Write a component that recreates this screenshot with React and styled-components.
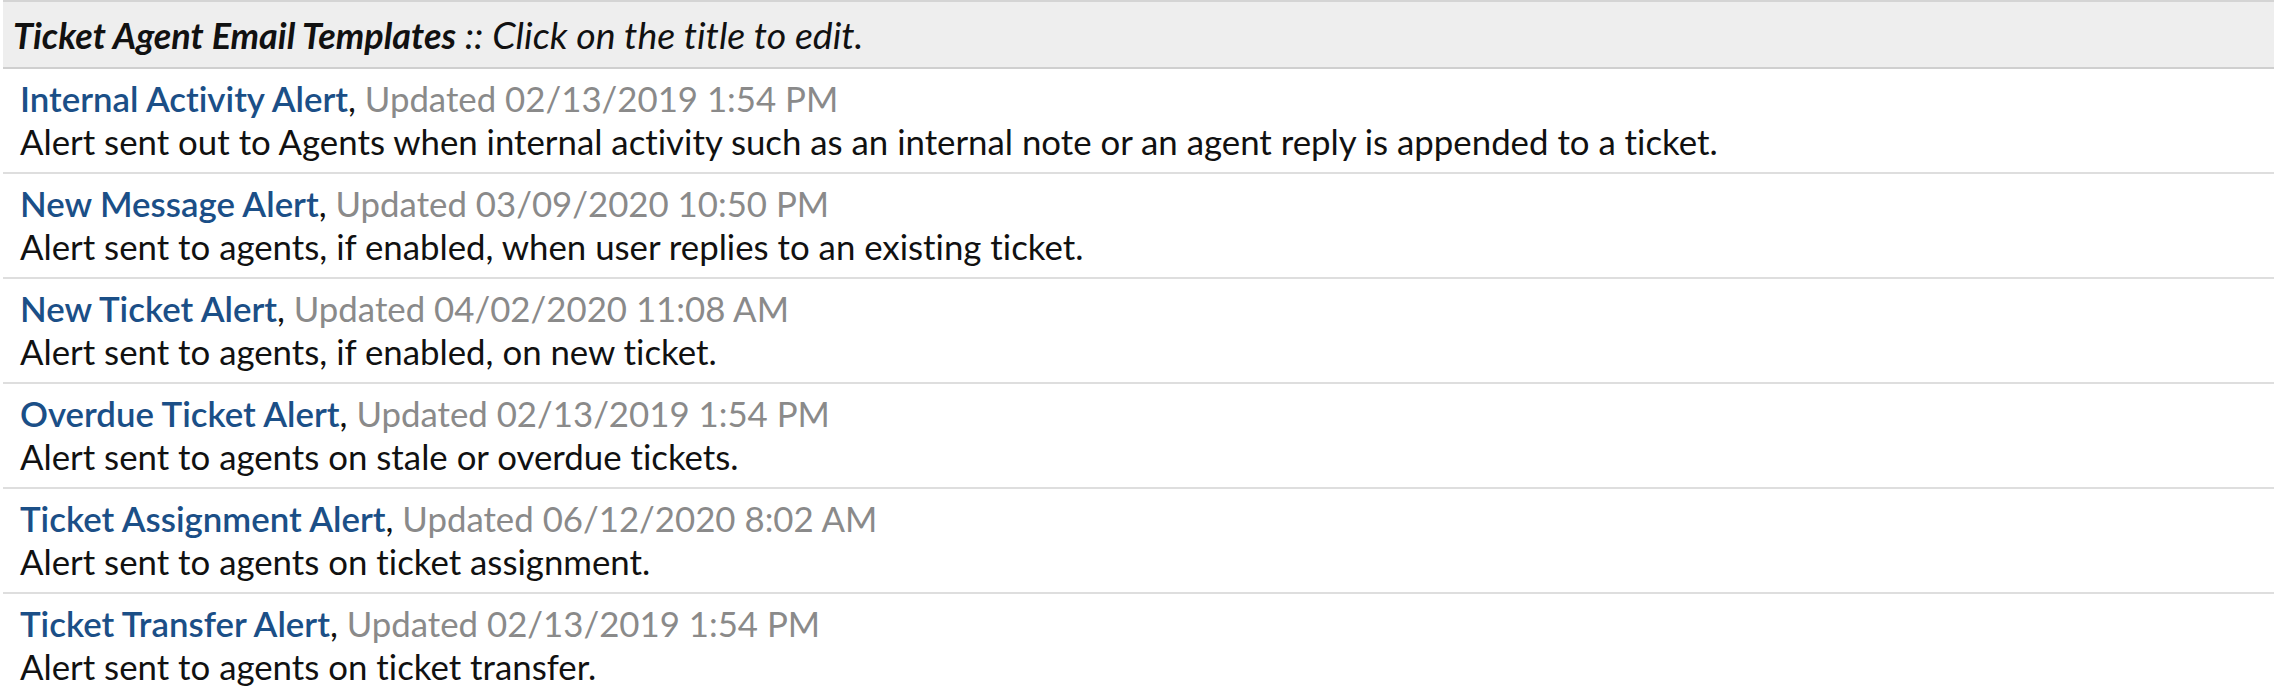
import styled, { createGlobalStyle } from "styled-components";

const GlobalStyle = createGlobalStyle`
  html, body {
    margin: 0;
    padding: 0;
    background: #fff;
  }
  body {
    font-family: Lato, "Noto Sans", sans-serif;
    font-size: 34.8px;
    line-height: 43px;
    color: #111;
    font-variant-ligatures: none;
  }
`;

const Page = styled.div`
  padding-left: 3px;
`;

const Header = styled.div`
  background: #eeeeee;
  border-top: 2px solid #d4d4d4;
  border-bottom: 2px solid #cfcfcf;
  padding: 11px 16px 10px 10px;
  font-size: 37.5px;
  font-style: italic;
  color: #111;
`;

const HeaderTitle = styled.b`
  font-size: 36px;
  font-weight: 700;
`;

const Row = styled.div`
  padding: 8px 16px 9px 17px;
  border-bottom: ${(p) => (p.$last ? "none" : "2px solid #dedede")};
`;

const TitleLink = styled.a`
  color: #1b4f87;
  font-weight: 600;
  text-decoration: none;
  cursor: pointer;
`;

const Updated = styled.span`
  color: #8a8a8a;
`;

const Description = styled.div`
  color: #111;
`;

const templates = [
  {
    title: "Internal Activity Alert",
    updated: "02/13/2019 1:54 PM",
    desc: "Alert sent out to Agents when internal activity such as an internal note or an agent reply is appended to a ticket.",
  },
  {
    title: "New Message Alert",
    updated: "03/09/2020 10:50 PM",
    desc: "Alert sent to agents, if enabled, when user replies to an existing ticket.",
  },
  {
    title: "New Ticket Alert",
    updated: "04/02/2020 11:08 AM",
    desc: "Alert sent to agents, if enabled, on new ticket.",
  },
  {
    title: "Overdue Ticket Alert",
    updated: "02/13/2019 1:54 PM",
    desc: "Alert sent to agents on stale or overdue tickets.",
  },
  {
    title: "Ticket Assignment Alert",
    updated: "06/12/2020 8:02 AM",
    desc: "Alert sent to agents on ticket assignment.",
  },
  {
    title: "Ticket Transfer Alert",
    updated: "02/13/2019 1:54 PM",
    desc: "Alert sent to agents on ticket transfer.",
  },
];

const App = () => {
  return (
    <Page>
      <GlobalStyle />
      <Header>
        <HeaderTitle>Ticket Agent Email Templates</HeaderTitle> :: Click on the title to edit.
      </Header>
      {templates.map((t, i) => (
        <Row key={t.title} $last={i === templates.length - 1}>
          <div>
            <TitleLink>{t.title}</TitleLink>, <Updated>Updated {t.updated}</Updated>
          </div>
          <Description>{t.desc}</Description>
        </Row>
      ))}
    </Page>
  );
};

export default App;
